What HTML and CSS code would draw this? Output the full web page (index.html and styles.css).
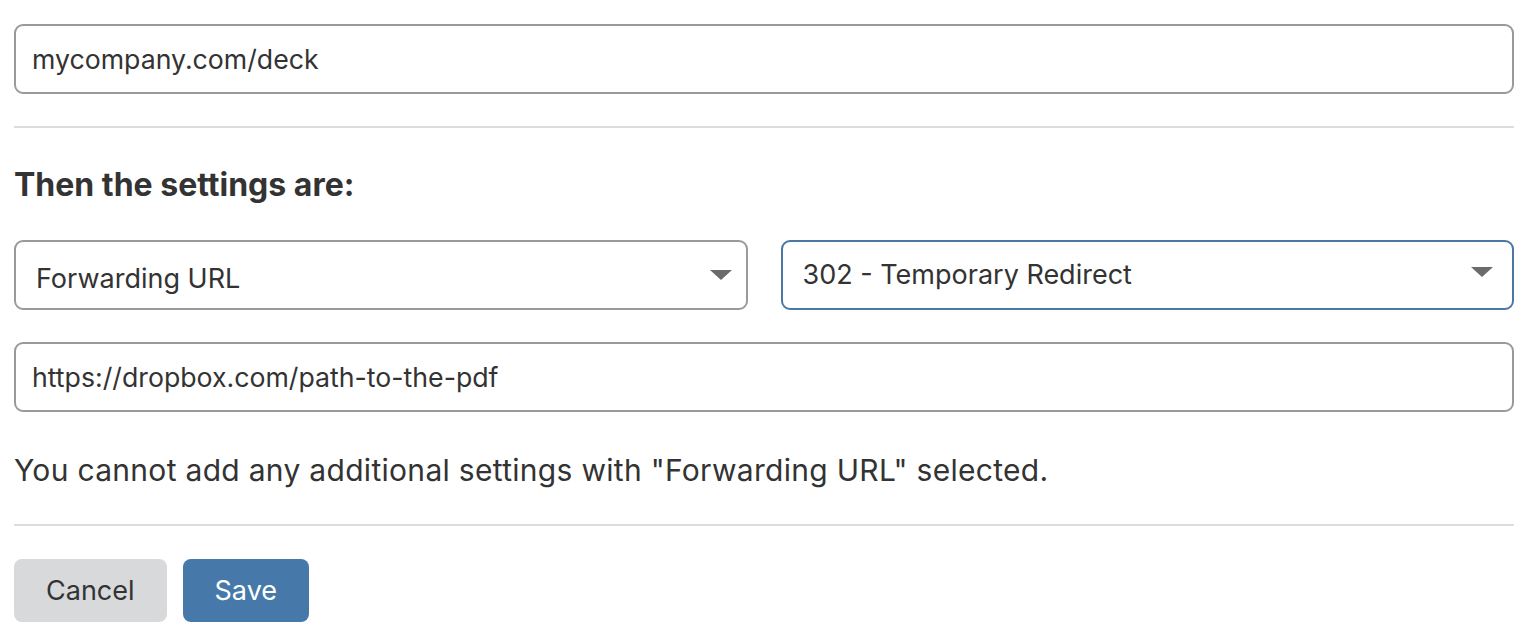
FILE: index.html
```html
<!DOCTYPE html>
<html>
<head>
<meta charset="utf-8">
<link rel="stylesheet" href="styles.css">
</head>
<body>
<div class="page">
  <div class="field">mycompany.com/deck</div>
  <hr class="divider first">
  <h2 class="heading">Then the settings are:</h2>
  <div class="selects">
    <div class="select">
      <span class="select-text">Forwarding URL</span>
      <span class="caret"></span>
    </div>
    <div class="select focused">
      <span class="select-text">302 - Temporary Redirect</span>
      <span class="caret"></span>
    </div>
  </div>
  <div class="field">https://dropbox.com/path-to-the-pdf</div>
  <p class="note">You cannot add any additional settings with "Forwarding URL" selected.</p>
  <hr class="divider last">
  <div class="actions">
    <button class="btn cancel">Cancel</button>
    <button class="btn save">Save</button>
  </div>
</div>
</body>
</html>
```
FILE: styles.css
```css
html, body {
  margin: 0;
  padding: 0;
  background: #ffffff;
}
body {
  font-family: Inter, "Liberation Sans", sans-serif;
  color: #333333;
}
.page {
  padding: 24px 16px 0 14px;
  display: flex;
  flex-direction: column;
}
.field {
  height: 70px;
  box-sizing: border-box;
  border: 2px solid #9a9a9a;
  border-radius: 9px;
  padding: 0 16px;
  display: flex;
  align-items: center;
  font-size: 26.7px;
  color: #333;
}
.divider {
  border: 0;
  height: 2px;
  background: #dcdcdc;
  margin: 32px 0 0 0;
}
.heading {
  font-size: 32px;
  font-weight: 700;
  margin: 38px 0 0 0;
  line-height: 38px;
  color: #333;
}
.selects {
  display: grid;
  grid-template-columns: 1fr 1fr;
  gap: 33px;
  margin-top: 36px;
  margin-bottom: 32px;
}
.select {
  height: 70px;
  box-sizing: border-box;
  border: 2px solid #9a9a9a;
  border-radius: 9px;
  padding: 6px 14px 0 20px;
  display: flex;
  align-items: center;
  justify-content: space-between;
  font-size: 27px;
}
.select.focused {
  border-color: #4a77a6;
  padding: 0 19px 2px 20px;
}
.caret {
  width: 0;
  height: 0;
  border-left: 11px solid transparent;
  border-right: 11px solid transparent;
  border-top: 10px solid #6b6b6b;
  margin-top: -6px;
}
.select.focused .caret {
  margin-top: -4px;
}
.note {
  font-size: 30px;
  letter-spacing: 0.3px;
  margin: 38px 0 0 0;
  line-height: 40px;
}
.divider.last {
  margin-top: 34px;
}
.actions {
  display: flex;
  gap: 16px;
  margin-top: 33px;
}
.btn {
  font-family: Inter, "Liberation Sans", sans-serif;
  font-size: 27px;
  height: 63px;
  border: 0;
  border-radius: 8px;
  padding: 0 32px;
}
.cancel {
  background: #d8d9da;
  color: #333;
}
.save {
  background: #4679aa;
  color: #ffffff;
}
```
